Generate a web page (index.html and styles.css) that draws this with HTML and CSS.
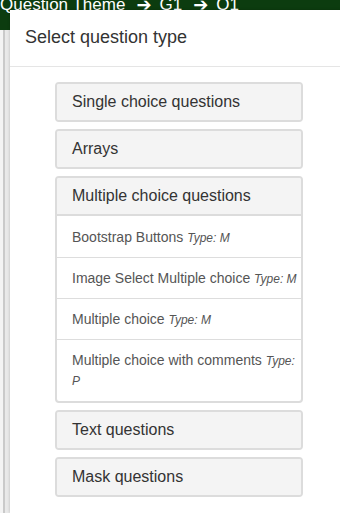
FILE: index.html
```html
<!DOCTYPE html>
<html lang="en">
<head>
    <meta charset="UTF-8">
    <meta name="viewport" content="width=device-width, initial-scale=1.0">
    <title>Select question type</title>
    <link rel="stylesheet" href="styles.css">
</head>
<body>
    <div class="topbar">
        <span class="crumb">Question Theme</span>
        <span class="arrow">&#10132;</span>
        <span class="crumb">G1</span>
        <span class="arrow">&#10132;</span>
        <span class="crumb">Q1</span>
    </div>
    <div class="page"></div>

    <div class="modal">
        <div class="modal-header">
            <h4 class="modal-title">Select question type</h4>
        </div>
        <div class="modal-body">
            <div class="panel-group">
                <div class="panel">
                    <div class="panel-heading">Single choice questions</div>
                </div>
                <div class="panel">
                    <div class="panel-heading">Arrays</div>
                </div>
                <div class="panel">
                    <div class="panel-heading open">Multiple choice questions</div>
                    <div class="list-group">
                        <div class="list-item">Bootstrap Buttons <em>Type: M</em></div>
                        <div class="list-item">Image Select Multiple choice <em>Type: M</em></div>
                        <div class="list-item">Multiple choice <em>Type: M</em></div>
                        <div class="list-item">Multiple choice with comments <em>Type: P</em></div>
                    </div>
                </div>
                <div class="panel">
                    <div class="panel-heading">Text questions</div>
                </div>
                <div class="panel">
                    <div class="panel-heading">Mask questions</div>
                </div>
            </div>
        </div>
    </div>
</body>
</html>
```

FILE: styles.css
```css
* {
    box-sizing: border-box;
}
body {
    margin: 0;
    height: 513px;
    overflow: hidden;
    background-color: #f4f4f4;
    font-family: "Liberation Sans", Arial, sans-serif;
    color: #333;
}
.topbar {
    height: 30px;
    background-color: #0c3c0f;
    color: #fff;
    font-size: 17px;
    line-height: 10px;
    white-space: nowrap;
    display: flex;
}
.crumb {
    display: inline-block;
}
.arrow {
    font-family: "DejaVu Sans", sans-serif;
    font-size: 18px;
    font-weight: bold;
    margin: 0 8px 0 11px;
}
.page {
    margin-left: 3px;
    height: 483px;
    border-left: 2px solid #cacaca;
    background-color: #e9e9e9;
}

/* modal lies over the page */
.modal {
    position: absolute;
    top: 10px;
    left: 10px;
    right: -20px;
    bottom: 0;
    background-color: #fff;
    box-shadow: 0 0 3px rgba(0, 0, 0, 0.2);
}
.modal-header {
    padding: 15px;
    border-bottom: 1px solid #e5e5e5;
}
.modal-title {
    margin: 0;
    font-size: 18px;
    font-weight: normal;
    line-height: 25.7px;
    color: #333;
}
.modal-body {
    padding: 15px 15px 15px 45px;
}
.panel-group {
    width: 248px;
    display: flex;
    flex-direction: column;
    gap: 7px;
}
.panel {
    border: 2px solid #dcdcdc;
    border-radius: 4px;
    background-color: #fff;
    overflow: hidden;
}
.panel-heading {
    padding: 9px 15px;
    font-size: 16px;
    line-height: 18px;
    background-color: #f4f4f4;
    color: #333;
}
.panel-heading.open {
    border-bottom: 2px solid #dcdcdc;
}
.list-group {
    padding-top: 1px;
}
.list-item {
    padding: 10px 2px 10px 15px;
    font-size: 14px;
    line-height: 20px;
    color: #555;
    border-bottom: 1px solid #ddd;
}
.list-item:last-child {
    border-bottom: none;
    padding-bottom: 11px;
}
.list-item em {
    font-size: 12px;
    line-height: 1;
}
```
